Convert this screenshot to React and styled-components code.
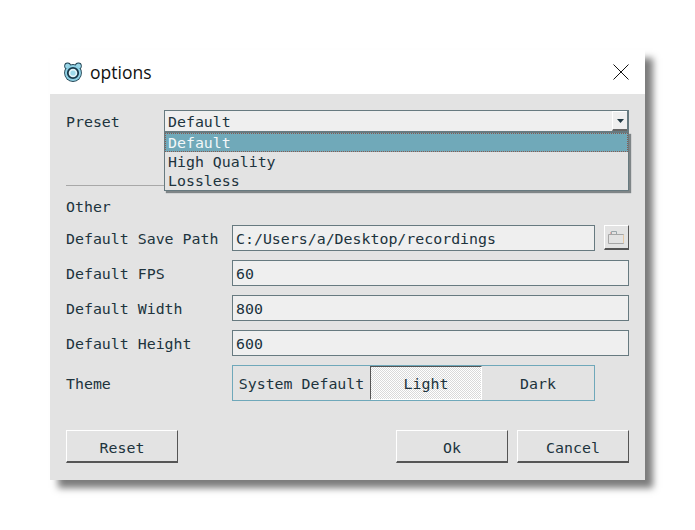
import React from "react";
import styled, { createGlobalStyle } from "styled-components";

const Global = createGlobalStyle`
  html, body { margin: 0; padding: 0; background: #fff; }
  body { width: 695px; height: 530px; overflow: hidden; }
`;
const Page = styled.div`
  padding: 50px 50px 50px 50px;
  box-sizing: border-box;
  width: 695px;
  height: 530px;
`;
const Win = styled.div`
  width: 595px;
  height: 430px;
  display: flex;
  flex-direction: column;
  box-shadow: 8px 8px 7px 0 #7c7c7c;
  font-family: "DejaVu Sans Mono", monospace;
  font-size: 14.9px;
  color: #20333d;
`;
const TitleBar = styled.div`
  height: 44px;
  background: #fff;
  display: flex;
  align-items: center;
  padding: 0 16px 0 13px;
  flex: none;
`;
const Title = styled.div`
  font-family: "Open Sans", "Noto Sans", sans-serif;
  font-size: 17.5px;
  color: #111;
  margin-left: 7px;
  flex: 1;
`;
const Body = styled.div`
  flex: 1;
  background: #e3e3e3;
  padding: 16px 16px 17px;
  display: flex;
  flex-direction: column;
`;
const TopRow = styled.div`
  position: relative;
  display: flex;
  height: 22px;
`;
const TopLabel = styled.div`
  width: 98px;
  flex: none;
  line-height: 24px;
`;
const Combo = styled.div`
  flex: 1;
  position: relative;
  border: 1px solid #677a80;
  border-right-width: 2px;
  background: #efefef;
  box-sizing: border-box;
  line-height: 22px;
  padding-left: 3px;
`;
const ComboButton = styled.div`
  position: absolute;
  right: 0;
  top: 0;
  width: 15px;
  height: 20px;
  box-sizing: border-box;
  background: #efefef;
  border-top: 1px solid #fff;
  border-left: 1px solid #fff;
  border-bottom: 2px solid #666;
  display: flex;
  align-items: center;
  justify-content: center;
`;
const Popup = styled.div`
  position: absolute;
  left: 98px;
  top: 22px;
  width: 465px;
  height: 59px;
  box-sizing: border-box;
  background: #e3e3e3;
  border: 1px solid #677a80;
  box-shadow: 2px 2px 1px #7f8587;
  z-index: 2;
`;
const Option = styled.div`
  height: 19px;
  box-sizing: border-box;
  padding-left: 3px;
  line-height: 20px;
  ${(p) =>
    p.$selected
      ? `background: #70a9b9; color: #f2f7f8; outline: 1px dotted #8a5a50; outline-offset: -1px;`
      : ``}
`;
const Separator = styled.div`
  height: 1px;
  background: #a8a8a8;
  margin-top: 53px;
  flex: none;
`;
const Section = styled.div`
  height: 20px;
  line-height: 20px;
  margin: 11px 0 8px;
`;
const Form = styled.div`
  display: grid;
  grid-template-columns: 166px 1fr;
  row-gap: 9px;
  align-items: center;
`;
const Label = styled.div`
  height: 26px;
  line-height: 28px;
`;
const PathRow = styled.div`
  display: flex;
  gap: 9px;
  align-items: flex-start;
`;
const Field = styled.div`
  flex: 1;
  height: 26px;
  box-sizing: border-box;
  border: 1px solid #677a80;
  background: #efefef;
  line-height: 26px;
  padding-left: 3px;
`;
const FolderButton = styled.div`
  width: 25px;
  height: 25px;
  box-sizing: border-box;
  background: #e3e3e3;
  border-top: 1px solid #fff;
  border-left: 1px solid #fff;
  border-right: 1px solid #555;
  border-bottom: 2px solid #555;
  display: flex;
  align-items: center;
  justify-content: center;
`;
const Segments = styled.div`
  width: 363px;
  height: 36px;
  box-sizing: border-box;
  border: 1px solid #6fa8ba;
  display: flex;
  background: #e3e3e3;
`;
const Segment = styled.div`
  box-sizing: border-box;
  width: ${(p) => p.$w}px;
  text-align: center;
  line-height: 36px;
  white-space: nowrap;
  ${(p) =>
    p.$active
      ? `
    border-top: 1px solid #555;
    border-left: 1px solid #555;
    border-right: 1px solid #fff;
    border-bottom: 1px solid #fff;
    line-height: 35px;
    background-color: #e3e3e3;
    background-image: conic-gradient(#fff 25%, #d9d9d9 0 50%, #fff 0 75%, #d9d9d9 0);
    background-size: 2px 2px;
  `
      : ``}
`;
const Footer = styled.div`
  display: flex;
  margin-top: 29px;
  gap: 9px;
`;
const Button = styled.div`
  width: 112px;
  height: 33px;
  box-sizing: border-box;
  background: #e3e3e3;
  border-top: 1px solid #fff;
  border-left: 1px solid #fff;
  border-right: 1px solid #555;
  border-bottom: 2px solid #555;
  text-align: center;
  line-height: 35px;
  ${(p) => (p.$push ? "margin-right: auto;" : "")}
`;

const Logo = () => (
  <svg width="20" height="22" viewBox="0 0 20 22">
    <circle cx="4.6" cy="5" r="3.4" fill="#1e4252" />
    <circle cx="15.4" cy="5" r="3.4" fill="#1e4252" />
    <circle cx="10" cy="12" r="8.9" fill="#1e4252" />
    <circle cx="4.6" cy="5" r="2.5" fill="#9ad6e8" />
    <circle cx="15.4" cy="5" r="2.5" fill="#9ad6e8" />
    <circle cx="10" cy="12" r="8" fill="#8ed0e4" />
    <circle cx="10" cy="12" r="5.2" fill="#e3f5f9" stroke="#17384a" strokeWidth="1.8" />
    <circle cx="10" cy="12" r="2.6" fill="#9fdaea" />
  </svg>
);
const CloseIcon = () => (
  <svg width="16" height="16" viewBox="0 0 16 16">
    <path d="M0.5 0.5L15.5 15.5M15.5 0.5L0.5 15.5" stroke="#111" strokeWidth="1" fill="none" />
  </svg>
);
const ArrowIcon = () => (
  <svg width="7" height="4" viewBox="0 0 7 4">
    <path d="M0 0H7L3.5 4Z" fill="#233a44" />
  </svg>
);
const FolderIcon = () => (
  <svg width="17" height="13" viewBox="0 0 17 13">
    <path d="M0.5 3.5H15.5V12.5H0.5Z" fill="none" stroke="#a6a6a6" />
    <path d="M3.5 3V0.5H8.5V3" fill="none" stroke="#9aa6ab" />
    <path d="M15.5 4V12" stroke="#e6c9a5" />
    <path d="M2.5 1V3" stroke="#e3b0ac" />
  </svg>
);

export default function App() {
  return (
    <>
      <Global />
      <Page>
        <Win>
          <TitleBar>
            <Logo />
            <Title>options</Title>
            <CloseIcon />
          </TitleBar>
          <Body>
            <TopRow>
              <TopLabel>Preset</TopLabel>
              <Combo>
                Default
                <ComboButton>
                  <ArrowIcon />
                </ComboButton>
              </Combo>
              <Popup>
                <Option $selected>Default</Option>
                <Option>High Quality</Option>
                <Option>Lossless</Option>
              </Popup>
            </TopRow>
            <Separator />
            <Section>Other</Section>
            <Form>
              <Label>Default Save Path</Label>
              <PathRow>
                <Field>C:/Users/a/Desktop/recordings</Field>
                <FolderButton>
                  <FolderIcon />
                </FolderButton>
              </PathRow>
              <Label>Default FPS</Label>
              <Field>60</Field>
              <Label>Default Width</Label>
              <Field>800</Field>
              <Label>Default Height</Label>
              <Field>600</Field>
              <Label>Theme</Label>
              <Segments>
                <Segment $w={137}>System Default</Segment>
                <Segment $w={112} $active>Light</Segment>
                <Segment $w={112}>Dark</Segment>
              </Segments>
            </Form>
            <Footer>
              <Button $push>Reset</Button>
              <Button>Ok</Button>
              <Button>Cancel</Button>
            </Footer>
          </Body>
        </Win>
      </Page>
    </>
  );
}
